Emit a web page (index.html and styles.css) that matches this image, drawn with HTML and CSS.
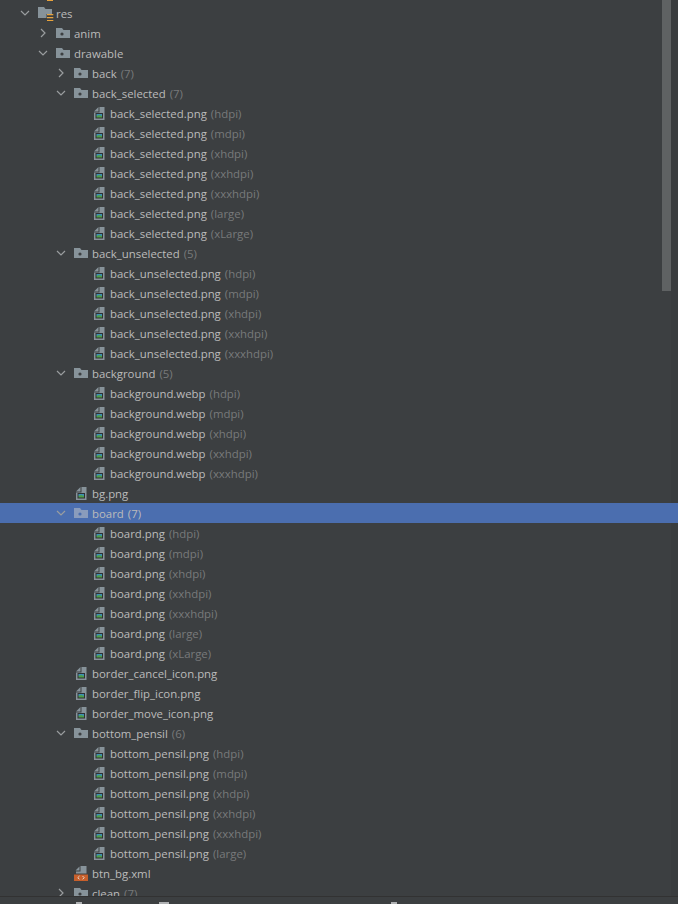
FILE: index.html
```html
<!DOCTYPE html>
<html lang="en">
<head>
	<meta charset="utf-8">
	<title>Project tree</title>
	<link rel="stylesheet" href="styles.css">
</head>
<body>
	<svg class="defs" width="0" height="0">
		<symbol id="open" viewBox="0 0 10 10"><path d="M1 3 5 7 9 3" fill="none" stroke="#9a9d9f" stroke-width="1.2"/></symbol>
		<symbol id="closed" viewBox="0 0 10 10"><path d="M3 1 7 5 3 9" fill="none" stroke="#9a9d9f" stroke-width="1.2"/></symbol>
		<symbol id="folder" viewBox="0 0 14 10"><path d="M0 0h6l1.500 2H14v8H0z" fill="#87939a"/><circle cx="6" cy="6" r="1.600" fill="#3c3f41"/></symbol>
		<symbol id="folder-sel" viewBox="0 0 14 10"><path d="M0 0h6l1.500 2H14v8H0z" fill="#8a9cbc"/><circle cx="6" cy="6" r="1.600" fill="#4b6eaf"/></symbol>
		<symbol id="folder-res" viewBox="0 0 16 14"><path d="M0 0h6l1.500 2H14v5H8.500v4H0z" fill="#87939a"/><path d="M9 7h6.300v1.300H9zM9 10h6.300v1.300H9zM9 13h6.300v1H9z" fill="#e8a33d"/></symbol>
		<symbol id="image" viewBox="0 0 11 13"><path d="M4.500 0v4.500H0z" fill="#87939a"/><path d="M5.500 0h5v13H0V5.500h5.500z" fill="#87939a"/><path d="M1.500 6h7.500v5.500H1.500z" fill="#2f3234"/><path d="M2.500 7h5.500v2H2.500z" fill="#3d8fb5"/><path d="M2.500 9 5 8l3 1v1.500H2.500z" fill="#4f9e4a"/></symbol>
		<symbol id="xml" viewBox="0 0 14 15"><path d="M5.500.5v4H1.500z" fill="#87939a"/><path d="M6.500 0h6v7.500H2V5.500h4.500z" fill="#87939a"/><path d="M0 8.500h14V15H0z" fill="#c75f2b"/><path d="M5.500 10 3.800 11.700l1.700 1.700M8.500 10l1.700 1.700-1.700 1.700" fill="none" stroke="#e6d8cc" stroke-width="1"/></symbol>
	</svg>

	<div class="tree">
		<div class="cutoff"><span class="cutoff-mark"></span></div>
		<div class="row lvl1"><span class="arrow"><svg><use href="#open"/></svg></span><svg class="ic-res"><use href="#folder-res"/></svg><span class="name">res</span></div>
		<div class="row lvl2"><span class="arrow"><svg><use href="#closed"/></svg></span><svg class="ic-folder"><use href="#folder"/></svg><span class="name">anim</span></div>
		<div class="row lvl2"><span class="arrow"><svg><use href="#open"/></svg></span><svg class="ic-folder"><use href="#folder"/></svg><span class="name">drawable</span></div>

		<div class="row lvl3"><span class="arrow"><svg><use href="#closed"/></svg></span><svg class="ic-folder"><use href="#folder"/></svg><span class="name">back</span><span class="hint">(7)</span></div>
		<div class="row lvl3"><span class="arrow"><svg><use href="#open"/></svg></span><svg class="ic-folder"><use href="#folder"/></svg><span class="name">back_selected</span><span class="hint">(7)</span></div>
		<div class="row lvl4"><span class="arrow"></span><svg class="ic-file"><use href="#image"/></svg><span class="name">back_selected.png</span><span class="hint">(hdpi)</span></div>
		<div class="row lvl4"><span class="arrow"></span><svg class="ic-file"><use href="#image"/></svg><span class="name">back_selected.png</span><span class="hint">(mdpi)</span></div>
		<div class="row lvl4"><span class="arrow"></span><svg class="ic-file"><use href="#image"/></svg><span class="name">back_selected.png</span><span class="hint">(xhdpi)</span></div>
		<div class="row lvl4"><span class="arrow"></span><svg class="ic-file"><use href="#image"/></svg><span class="name">back_selected.png</span><span class="hint">(xxhdpi)</span></div>
		<div class="row lvl4"><span class="arrow"></span><svg class="ic-file"><use href="#image"/></svg><span class="name">back_selected.png</span><span class="hint">(xxxhdpi)</span></div>
		<div class="row lvl4"><span class="arrow"></span><svg class="ic-file"><use href="#image"/></svg><span class="name">back_selected.png</span><span class="hint">(large)</span></div>
		<div class="row lvl4"><span class="arrow"></span><svg class="ic-file"><use href="#image"/></svg><span class="name">back_selected.png</span><span class="hint">(xLarge)</span></div>

		<div class="row lvl3"><span class="arrow"><svg><use href="#open"/></svg></span><svg class="ic-folder"><use href="#folder"/></svg><span class="name">back_unselected</span><span class="hint">(5)</span></div>
		<div class="row lvl4"><span class="arrow"></span><svg class="ic-file"><use href="#image"/></svg><span class="name">back_unselected.png</span><span class="hint">(hdpi)</span></div>
		<div class="row lvl4"><span class="arrow"></span><svg class="ic-file"><use href="#image"/></svg><span class="name">back_unselected.png</span><span class="hint">(mdpi)</span></div>
		<div class="row lvl4"><span class="arrow"></span><svg class="ic-file"><use href="#image"/></svg><span class="name">back_unselected.png</span><span class="hint">(xhdpi)</span></div>
		<div class="row lvl4"><span class="arrow"></span><svg class="ic-file"><use href="#image"/></svg><span class="name">back_unselected.png</span><span class="hint">(xxhdpi)</span></div>
		<div class="row lvl4"><span class="arrow"></span><svg class="ic-file"><use href="#image"/></svg><span class="name">back_unselected.png</span><span class="hint">(xxxhdpi)</span></div>

		<div class="row lvl3"><span class="arrow"><svg><use href="#open"/></svg></span><svg class="ic-folder"><use href="#folder"/></svg><span class="name">background</span><span class="hint">(5)</span></div>
		<div class="row lvl4"><span class="arrow"></span><svg class="ic-file"><use href="#image"/></svg><span class="name">background.webp</span><span class="hint">(hdpi)</span></div>
		<div class="row lvl4"><span class="arrow"></span><svg class="ic-file"><use href="#image"/></svg><span class="name">background.webp</span><span class="hint">(mdpi)</span></div>
		<div class="row lvl4"><span class="arrow"></span><svg class="ic-file"><use href="#image"/></svg><span class="name">background.webp</span><span class="hint">(xhdpi)</span></div>
		<div class="row lvl4"><span class="arrow"></span><svg class="ic-file"><use href="#image"/></svg><span class="name">background.webp</span><span class="hint">(xxhdpi)</span></div>
		<div class="row lvl4"><span class="arrow"></span><svg class="ic-file"><use href="#image"/></svg><span class="name">background.webp</span><span class="hint">(xxxhdpi)</span></div>

		<div class="row lvl3"><span class="arrow"></span><svg class="ic-file"><use href="#image"/></svg><span class="name">bg.png</span></div>

		<div class="row lvl3 selected"><span class="arrow"><svg><use href="#open"/></svg></span><svg class="ic-folder"><use href="#folder-sel"/></svg><span class="name">board</span><span class="hint">(7)</span></div>
		<div class="row lvl4"><span class="arrow"></span><svg class="ic-file"><use href="#image"/></svg><span class="name">board.png</span><span class="hint">(hdpi)</span></div>
		<div class="row lvl4"><span class="arrow"></span><svg class="ic-file"><use href="#image"/></svg><span class="name">board.png</span><span class="hint">(mdpi)</span></div>
		<div class="row lvl4"><span class="arrow"></span><svg class="ic-file"><use href="#image"/></svg><span class="name">board.png</span><span class="hint">(xhdpi)</span></div>
		<div class="row lvl4"><span class="arrow"></span><svg class="ic-file"><use href="#image"/></svg><span class="name">board.png</span><span class="hint">(xxhdpi)</span></div>
		<div class="row lvl4"><span class="arrow"></span><svg class="ic-file"><use href="#image"/></svg><span class="name">board.png</span><span class="hint">(xxxhdpi)</span></div>
		<div class="row lvl4"><span class="arrow"></span><svg class="ic-file"><use href="#image"/></svg><span class="name">board.png</span><span class="hint">(large)</span></div>
		<div class="row lvl4"><span class="arrow"></span><svg class="ic-file"><use href="#image"/></svg><span class="name">board.png</span><span class="hint">(xLarge)</span></div>

		<div class="row lvl3"><span class="arrow"></span><svg class="ic-file"><use href="#image"/></svg><span class="name">border_cancel_icon.png</span></div>
		<div class="row lvl3"><span class="arrow"></span><svg class="ic-file"><use href="#image"/></svg><span class="name">border_flip_icon.png</span></div>
		<div class="row lvl3"><span class="arrow"></span><svg class="ic-file"><use href="#image"/></svg><span class="name">border_move_icon.png</span></div>

		<div class="row lvl3"><span class="arrow"><svg><use href="#open"/></svg></span><svg class="ic-folder"><use href="#folder"/></svg><span class="name">bottom_pensil</span><span class="hint">(6)</span></div>
		<div class="row lvl4"><span class="arrow"></span><svg class="ic-file"><use href="#image"/></svg><span class="name">bottom_pensil.png</span><span class="hint">(hdpi)</span></div>
		<div class="row lvl4"><span class="arrow"></span><svg class="ic-file"><use href="#image"/></svg><span class="name">bottom_pensil.png</span><span class="hint">(mdpi)</span></div>
		<div class="row lvl4"><span class="arrow"></span><svg class="ic-file"><use href="#image"/></svg><span class="name">bottom_pensil.png</span><span class="hint">(xhdpi)</span></div>
		<div class="row lvl4"><span class="arrow"></span><svg class="ic-file"><use href="#image"/></svg><span class="name">bottom_pensil.png</span><span class="hint">(xxhdpi)</span></div>
		<div class="row lvl4"><span class="arrow"></span><svg class="ic-file"><use href="#image"/></svg><span class="name">bottom_pensil.png</span><span class="hint">(xxxhdpi)</span></div>
		<div class="row lvl4"><span class="arrow"></span><svg class="ic-file"><use href="#image"/></svg><span class="name">bottom_pensil.png</span><span class="hint">(large)</span></div>

		<div class="row lvl3"><span class="arrow"></span><svg class="ic-xml"><use href="#xml"/></svg><span class="name">btn_bg.xml</span></div>
		<div class="row lvl3"><span class="arrow"><svg><use href="#closed"/></svg></span><svg class="ic-folder"><use href="#folder"/></svg><span class="name">clean</span><span class="hint">(7)</span></div>

		<div class="scrollbar"></div>
	</div>
	<div class="statusbar">
		<span class="stub stub-a"></span>
		<span class="stub stub-b"></span>
		<span class="stub stub-c"></span>
	</div>
</body>
</html>
```

FILE: styles.css
```css
html, body {
  margin: 0;
  height: 100%;
  overflow: hidden;
}

body {
  display: flex;
  flex-direction: column;
  background-color: #3c3f41;
  color: #bbbbbb;
  font-family: "Open Sans", "Liberation Sans", sans-serif;
  font-size: 11.4px;
}

.defs {
  position: absolute;
}

.tree {
  position: relative;
  flex: 1;
  min-height: 0;
  overflow: hidden;
  background: linear-gradient(to left, #393c3e 7px, transparent 7px);
}

.cutoff {
  height: 3px;
  padding-left: 47px;
}

.cutoff-mark {
  display: block;
  width: 6px;
  height: 1px;
  background-color: #e8a33d;
}

.row {
  display: flex;
  align-items: center;
  height: 20px;
  white-space: nowrap;
}

.lvl1 { padding-left: 16px; }
.lvl2 { padding-left: 34px; }
.lvl3 { padding-left: 52px; }
.lvl4 { padding-left: 70px; }

.selected {
  background-color: #4b6eaf;
}

.arrow {
  display: flex;
  justify-content: center;
  width: 18px;
  flex: none;
}

.arrow svg {
  width: 10px;
  height: 10px;
}

.ic-folder {
  width: 14px;
  height: 10px;
  margin: 0 4px;
  flex: none;
}

.ic-res {
  width: 16px;
  height: 14px;
  margin: 2px 2px 0 4px;
  flex: none;
}

.ic-file {
  width: 11px;
  height: 13px;
  margin: 0 5px 0 6px;
  flex: none;
}

.ic-xml {
  width: 14px;
  height: 15px;
  margin: 0 4px;
  flex: none;
}

.hint {
  margin-left: 4px;
  color: #787a7b;
}

.selected .hint {
  color: #bbbbbb;
}

.scrollbar {
  position: absolute;
  top: 0;
  left: 662px;
  width: 9px;
  height: 291px;
  background-color: #5f6263;
}

.statusbar {
  display: flex;
  align-items: flex-end;
  height: 7px;
  flex: none;
  border-top: 1px solid #323232;
}

.stub {
  height: 2px;
  background-color: #afb1b3;
}

.stub-a {
  width: 6px;
  margin-left: 76px;
}

.stub-b {
  width: 10px;
  margin-left: 77px;
}

.stub-c {
  width: 6px;
  margin-left: 222px;
}
```
